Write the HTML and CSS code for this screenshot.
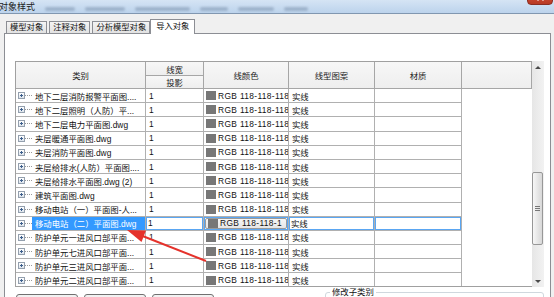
FILE: index.html
```html
<!DOCTYPE html>
<html lang="zh-CN">
<head>
<meta charset="utf-8">
<title>对象样式</title>
<link rel="stylesheet" href="styles.css">
</head>
<body>
<div class="titlebar">
  <span class="title">对象样式</span>
  <span class="blur w1"></span>
  <span class="blur w2"></span>
  <span class="blur w3"></span>
  <span class="blur w4"></span>
  <span class="blur w5"></span>
  <span class="blur w6"></span>
  <div class="close"></div>
</div>
<div class="tabstrip">
  <div class="tab">模型对象</div>
  <div class="tab">注释对象</div>
  <div class="tab">分析模型对象</div>
  <div class="tab active">导入对象</div>
</div>
<div class="panel">
  <div class="gridwrap">
    <div class="grid">
      <div class="head">
        <div class="h h-cat">类别</div>
        <div class="h h-lw">线宽</div>
        <div class="h h-col">线颜色</div>
        <div class="h h-pat">线型图案</div>
        <div class="h h-mat">材质</div>
        <div class="h h-emp"></div>
        <div class="h h-proj">投影</div>
      </div>
      <div class="body">
        <div class="row"><div class="c1"><i class="exp"></i><i class="dots"></i><span class="name">地下二层消防报警平面图....</span></div><div class="c2">1</div><div class="c3"><i class="sw"></i><span class="rgb">RGB 118-118-118</span></div><div class="c4">实线</div><div class="c5"></div><div class="c6"></div></div>
        <div class="row"><div class="c1"><i class="exp"></i><i class="dots"></i><span class="name">地下二层照明（人防）平...</span></div><div class="c2">1</div><div class="c3"><i class="sw"></i><span class="rgb">RGB 118-118-118</span></div><div class="c4">实线</div><div class="c5"></div><div class="c6"></div></div>
        <div class="row"><div class="c1"><i class="exp"></i><i class="dots"></i><span class="name">地下二层电力平面图.dwg</span></div><div class="c2">1</div><div class="c3"><i class="sw"></i><span class="rgb">RGB 118-118-118</span></div><div class="c4">实线</div><div class="c5"></div><div class="c6"></div></div>
        <div class="row"><div class="c1"><i class="exp"></i><i class="dots"></i><span class="name">夹层暖通平面图.dwg</span></div><div class="c2">1</div><div class="c3"><i class="sw"></i><span class="rgb">RGB 118-118-118</span></div><div class="c4">实线</div><div class="c5"></div><div class="c6"></div></div>
        <div class="row"><div class="c1"><i class="exp"></i><i class="dots"></i><span class="name">夹层消防平面图.dwg</span></div><div class="c2">1</div><div class="c3"><i class="sw"></i><span class="rgb">RGB 118-118-118</span></div><div class="c4">实线</div><div class="c5"></div><div class="c6"></div></div>
        <div class="row"><div class="c1"><i class="exp"></i><i class="dots"></i><span class="name">夹层给排水(人防）平面图....</span></div><div class="c2">1</div><div class="c3"><i class="sw"></i><span class="rgb">RGB 118-118-118</span></div><div class="c4">实线</div><div class="c5"></div><div class="c6"></div></div>
        <div class="row"><div class="c1"><i class="exp"></i><i class="dots"></i><span class="name">夹层给排水平面图.dwg (2)</span></div><div class="c2">1</div><div class="c3"><i class="sw"></i><span class="rgb">RGB 118-118-118</span></div><div class="c4">实线</div><div class="c5"></div><div class="c6"></div></div>
        <div class="row"><div class="c1"><i class="exp"></i><i class="dots"></i><span class="name">建筑平面图.dwg</span></div><div class="c2">1</div><div class="c3"><i class="sw"></i><span class="rgb">RGB 118-118-118</span></div><div class="c4">实线</div><div class="c5"></div><div class="c6"></div></div>
        <div class="row"><div class="c1"><i class="exp"></i><i class="dots"></i><span class="name">移动电站（一）平面图-人...</span></div><div class="c2">1</div><div class="c3"><i class="sw"></i><span class="rgb">RGB 118-118-118</span></div><div class="c4">实线</div><div class="c5"></div><div class="c6"></div></div>
        <div class="row sel"><div class="c1"><i class="exp"></i><i class="dots"></i><span class="name">移动电站（二）平面图.dwg</span></div><div class="c2">1</div><div class="c3"><span class="cbtn"><i class="sw"></i><span class="rgb">RGB 118-118-1</span></span></div><div class="c4">实线</div><div class="c5"></div><div class="c6"></div></div>
        <div class="row"><div class="c1"><i class="exp"></i><i class="dots"></i><span class="name">防护单元一进风口部平面...</span></div><div class="c2">1</div><div class="c3"><i class="sw"></i><span class="rgb">RGB 118-118-118</span></div><div class="c4">实线</div><div class="c5"></div><div class="c6"></div></div>
        <div class="row"><div class="c1"><i class="exp"></i><i class="dots"></i><span class="name">防护单元七进风口部平面...</span></div><div class="c2">1</div><div class="c3"><i class="sw"></i><span class="rgb">RGB 118-118-118</span></div><div class="c4">实线</div><div class="c5"></div><div class="c6"></div></div>
        <div class="row"><div class="c1"><i class="exp"></i><i class="dots"></i><span class="name">防护单元三进风口部平面...</span></div><div class="c2">1</div><div class="c3"><i class="sw"></i><span class="rgb">RGB 118-118-118</span></div><div class="c4">实线</div><div class="c5"></div><div class="c6"></div></div>
        <div class="row"><div class="c1"><i class="exp"></i><i class="dots"></i><span class="name">防护单元二进风口部平面...</span></div><div class="c2">1</div><div class="c3"><i class="sw"></i><span class="rgb">RGB 118-118-118</span></div><div class="c4">实线</div><div class="c5"></div><div class="c6"></div></div>
      </div>
    </div>
    <div class="scrollbar">
      <div class="sb-btn up"></div>
      <div class="sb-track"><div class="thumb"></div></div>
      <div class="sb-btn down"></div>
    </div>
  </div>
  <div class="bottom">
    <div class="btns">
      <button class="btn"></button>
      <button class="btn"></button>
      <button class="btn"></button>
    </div>
    <fieldset class="group"><legend>修改子类别</legend></fieldset>
  </div>
</div>
<svg class="arrow" width="554" height="297" viewBox="0 0 554 297">
  <line x1="140" y1="235" x2="206" y2="261" stroke="#e5322b" stroke-width="2"/>
  <polygon points="127,230 146,230.5 141.5,242" fill="#e5322b"/>
</svg>
</body>
</html>
```

FILE: styles.css
```css
* { box-sizing: border-box; margin: 0; padding: 0; }
html, body { width: 554px; height: 297px; overflow: hidden; background: #f0f0f0; }
body {
  position: relative;
  font-family: "Liberation Sans", "Noto Sans CJK SC", sans-serif;
  font-size: 8.4px;
  color: #111;
}

/* title bar */
.titlebar {
  position: relative;
  height: 14px;
  border-bottom: 1px solid #8197b0;
  background: linear-gradient(#d5e4f4, #bcd3ec);
  display: flex;
  align-items: center;
  gap: 10px;
}
.title { font-size: 9px; line-height: 12px; margin-left: -1px; color: #1b1b1b; }
.blur { height: 4px; margin-top: 4px; background: rgba(90, 112, 140, 0.35); filter: blur(1.2px); border-radius: 2px; }
.w1 { width: 30px; }
.w2 { width: 40px; }
.w3 { width: 55px; }
.w4 { width: 28px; }
.w5 { width: 36px; }
.w6 { width: 24px; }
.close {
  position: absolute;
  right: 1px;
  top: -13px;
  width: 26px;
  height: 18px;
  border: 1px solid #8a2d22;
  border-radius: 0 0 4px 4px;
  background: linear-gradient(#e59a8c, #c9462f 60%, #b83a24);
  overflow: hidden;
}
.close::before, .close::after {
  content: "";
  position: absolute;
  left: 8px;
  top: 8px;
  width: 9px;
  height: 2px;
  background: #fff;
  transform: rotate(45deg);
}
.close::after { transform: rotate(-45deg); }

/* tabs */
.tabstrip { height: 19px; display: flex; align-items: flex-end; padding-left: 6px; }
.tab {
  height: 12px;
  padding: 0 3px;
  margin-right: 2px;
  border: 1px solid #8c8e94;
  border-bottom: none;
  background: linear-gradient(#f4f4f4, #e2e2e2);
  font-size: 8.3px;
  line-height: 11px;
  white-space: nowrap;
}
.tab.active {
  position: relative;
  z-index: 1;
  height: 15px;
  margin-left: -2px;
  margin-bottom: -1px;
  padding: 0 5px;
  background: #fff;
  line-height: 12px;
}

/* panel */
.panel {
  position: relative;
  margin-left: 4px;
  width: 547px;
  height: 264px;
  overflow: hidden;
  background: #fff;
  border: 1px solid #8c8e94;
  border-bottom: none;
  padding: 27px 0 0 10px;
}
.gridwrap { display: flex; }
.grid {
  width: 517px;
  border: 1px solid #a0a0a0;
  border-right: none;
}
.head {
  display: grid;
  grid-template-columns: 130px 58px 85px 86px 87px 70px;
  grid-template-rows: 14px 13px;
}
.h {
  background: linear-gradient(#f7f7f7, #eeeeee);
  border-right: 1px solid #a6a6a6;
  border-bottom: 1px solid #a6a6a6;
  display: flex;
  align-items: center;
  justify-content: center;
  color: #222;
}
.h-cat { grid-column: 1; grid-row: 1 / span 2; }
.h-lw { grid-column: 2; grid-row: 1; }
.h-proj { grid-column: 2; grid-row: 2; }
.h-col { grid-column: 3; grid-row: 1 / span 2; }
.h-pat { grid-column: 4; grid-row: 1 / span 2; }
.h-mat { grid-column: 5; grid-row: 1 / span 2; }
.h-emp { grid-column: 6; grid-row: 1 / span 2; }

.body { height: 197px; overflow: hidden; }
.row {
  display: grid;
  grid-template-columns: 130px 58px 85px 86px 87px 70px;
  height: 14.2px;
}
.row > div {
  border-right: 1px solid #b0b0b0;
  border-bottom: 1px solid #b0b0b0;
  white-space: nowrap;
  overflow: hidden;
  display: flex;
  align-items: center;
  color: #111;
}
.row > .c6 { border: none; }
.c1 { padding-left: 2px; }
.exp {
  position: relative;
  flex: none;
  width: 7px;
  height: 7px;
  border: 1px solid #94a0ae;
  background: linear-gradient(#ffffff, #dde4ec);
}
.exp::before { content: ""; position: absolute; left: 1px; top: 2px; width: 3px; height: 1px; background: #3d5f8c; }
.exp::after { content: ""; position: absolute; left: 2px; top: 1px; width: 1px; height: 3px; background: #3d5f8c; }
.dots { flex: none; width: 7px; height: 0; border-top: 1px dotted #9a9a9a; }
.name {
  flex: 1;
  align-self: stretch;
  display: flex;
  align-items: center;
  padding-left: 3px;
}
.c2 { padding-left: 3px; }
.c3 { padding-left: 2px; }
.sw { flex: none; width: 10px; height: 9px; margin-right: 2px; background: #777777; }
.rgb { letter-spacing: 0.35px; }
.c4 { padding-left: 3px; }

/* selected row */
.sel .name { background: #3399ff; color: #fff; }
.sel .c2, .sel .c4, .sel .c5 { box-shadow: inset 0 0 0 1px #5aa6f2; }
.sel .c2 { padding-left: 2px; }
.sel .c4 { padding-left: 2px; }
.sel .c3 { padding: 1px; box-shadow: inset 0 0 0 1px #5aa6f2; }
.cbtn {
  flex: 1;
  align-self: stretch;
  display: flex;
  align-items: center;
  overflow: hidden;
  padding-left: 2px;
  border: 1px solid #9a9a9a;
  border-radius: 2px;
  background: linear-gradient(#f6f6f6, #e6e6e6);
}

/* scrollbar */
.scrollbar {
  width: 12px;
  height: 226px;
  display: flex;
  flex-direction: column;
  background: linear-gradient(90deg, #e6e6e6, #f2f2f2);
}
.sb-btn { height: 12px; display: flex; align-items: center; justify-content: center; }
.sb-btn::before { content: ""; border-left: 3px solid transparent; border-right: 3px solid transparent; }
.up::before { border-bottom: 3px solid #4a4a4a; }
.down::before { border-top: 3px solid #4a4a4a; }
.sb-track { flex: 1; }
.thumb {
  position: relative;
  margin-top: 99px;
  height: 73px;
  width: 11px;
  border: 1px solid #979797;
  border-radius: 2px;
  background: linear-gradient(90deg, #f7f7f7, #e4e4e4 60%, #d8d8d8);
}
.thumb::after {
  content: "";
  position: absolute;
  left: 2px;
  right: 2px;
  top: 33px;
  height: 5px;
  background: repeating-linear-gradient(#777 0 1px, transparent 1px 2px);
}

/* bottom controls */
.bottom { display: flex; align-items: flex-start; margin-top: 7px; padding-left: 1px; }
.btns { display: flex; gap: 6px; }
.btn {
  width: 62px;
  height: 21px;
  border: 1px solid #707070;
  border-radius: 3px;
  background: linear-gradient(#f2f2f2 45%, #dddddd 50%, #cfcfcf);
}
.group {
  margin-left: 111px;
  margin-top: -6px;
  width: 219px;
  height: 40px;
  border: 1px solid #d0d8de;
  border-radius: 3px;
  padding: 0 4px;
}
.group legend { padding: 0 2px; line-height: 9px; font-size: 8.4px; color: #111; }

.arrow { position: absolute; left: 0; top: 0; pointer-events: none; }
```
